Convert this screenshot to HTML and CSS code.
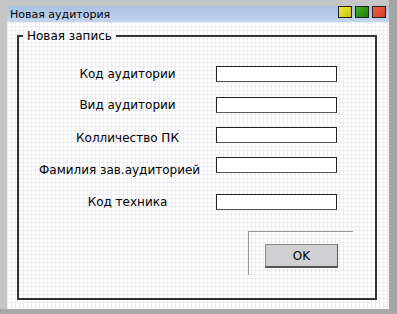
FILE: index.html
```html
<!DOCTYPE html>
<html lang="ru">
<head>
  <meta charset="UTF-8">
  <title>Новая аудитория</title>
  <link rel="stylesheet" href="styles.css">
</head>
<body>
  <div class="frame">
    <div class="window">
      <div class="titlebar">
        <span class="title">Новая аудитория</span>
        <div class="controls">
          <span class="ctl ctl-min"></span>
          <span class="ctl ctl-max"></span>
          <span class="ctl ctl-close"></span>
        </div>
      </div>
      <div class="content">
        <fieldset class="group">
          <legend>Новая запись</legend>
          <div class="row row-first">
            <label class="lbl">Код аудитории</label>
            <input type="text" class="field">
          </div>
          <div class="row">
            <label class="lbl">Вид аудитории</label>
            <input type="text" class="field">
          </div>
          <div class="row row-tight">
            <label class="lbl lbl-low">Колличество ПК</label>
            <input type="text" class="field">
          </div>
          <div class="row row-tight">
            <label class="lbl lbl-lower lbl-wide">Фамилия зав.аудиторией</label>
            <input type="text" class="field">
          </div>
          <div class="row row-wide">
            <label class="lbl">Код техника</label>
            <input type="text" class="field">
          </div>
          <div class="actions">
            <button class="btn">OK</button>
          </div>
        </fieldset>
      </div>
    </div>
  </div>
</body>
</html>
```

FILE: styles.css
```css
body {
  margin: 0;
  font-family: "DejaVu Sans", Verdana, sans-serif;
  background-color: #b0b0b0;
}
.frame {
  width: 397px;
  height: 314px;
  box-sizing: border-box;
  padding: 6px 0 0 7px;
  background-color: #c6c6c6;
  border-right: 8px solid #a4a4a4;
  border-bottom: 5px solid #a8a8a8;
}
.window {
  height: 100%;
  display: flex;
  flex-direction: column;
  background-color: #fff;
  background-image:
    linear-gradient(90deg, #ececf0 1px, transparent 1px),
    linear-gradient(#ececf2 1px, transparent 1px);
  background-size: 4px 4px;
}
.titlebar {
  height: 16px;
  display: flex;
  align-items: center;
  justify-content: space-between;
  background: linear-gradient(#a8c0e2, #c4d6ee);
}
.title {
  font-size: 11px;
  color: #000;
  padding-left: 3px;
}
.controls {
  display: flex;
  gap: 3px;
  padding-right: 3px;
  margin-top: -4px;
}
.ctl {
  width: 12px;
  height: 10px;
  border: 1px solid #222;
}
.ctl-min {
  background: linear-gradient(135deg, #eeee40, #c8c010);
}
.ctl-max {
  background: linear-gradient(135deg, #40b020, #1c7c08);
}
.ctl-close {
  background: linear-gradient(135deg, #f06048, #d83c28);
}
.content {
  flex: 1;
  display: flex;
}
.group {
  flex: 1;
  margin: 7px 12px 9px 10px;
  padding: 23px 0 0 0;
  border: 2px solid #333;
  min-width: 0;
}
.group legend {
  font-size: 12px;
  line-height: 14px;
  padding: 0 4px;
  margin-left: 4px;
  color: #000;
}
.row {
  display: grid;
  grid-template-columns: 177px 121px;
  padding-left: 20px;
  margin-top: 15px;
  height: 16px;
}
.row-first {
  margin-top: 0;
}
.row-tight {
  margin-top: 14px;
}
.row-wide {
  margin-top: 21px;
}
.lbl {
  font-size: 12px;
  line-height: 16px;
  text-align: center;
  white-space: nowrap;
  color: #000;
}
.lbl-low {
  margin-top: 3px;
}
.lbl-lower {
  margin-top: 5px;
}
.lbl-wide {
  padding-right: 28px;
}
.field {
  box-sizing: border-box;
  width: 121px;
  height: 16px;
  margin: 0;
  border: 1px solid #222;
  border-bottom-color: #555;
  background: #fff;
  padding: 0;
}
.actions {
  margin: 21px 0 0 229px;
  width: 88px;
  height: 31px;
  padding: 12px 0 0 16px;
  border-top: 1px solid #999;
  border-left: 1px solid #999;
}
.btn {
  width: 73px;
  height: 24px;
  font-family: "DejaVu Sans", Verdana, sans-serif;
  font-size: 12px;
  background: #d0d0d2;
  border: 1px solid #888;
  border-right-color: #555;
  border-bottom: 2px solid #555;
  padding: 0;
  color: #000;
}
```
